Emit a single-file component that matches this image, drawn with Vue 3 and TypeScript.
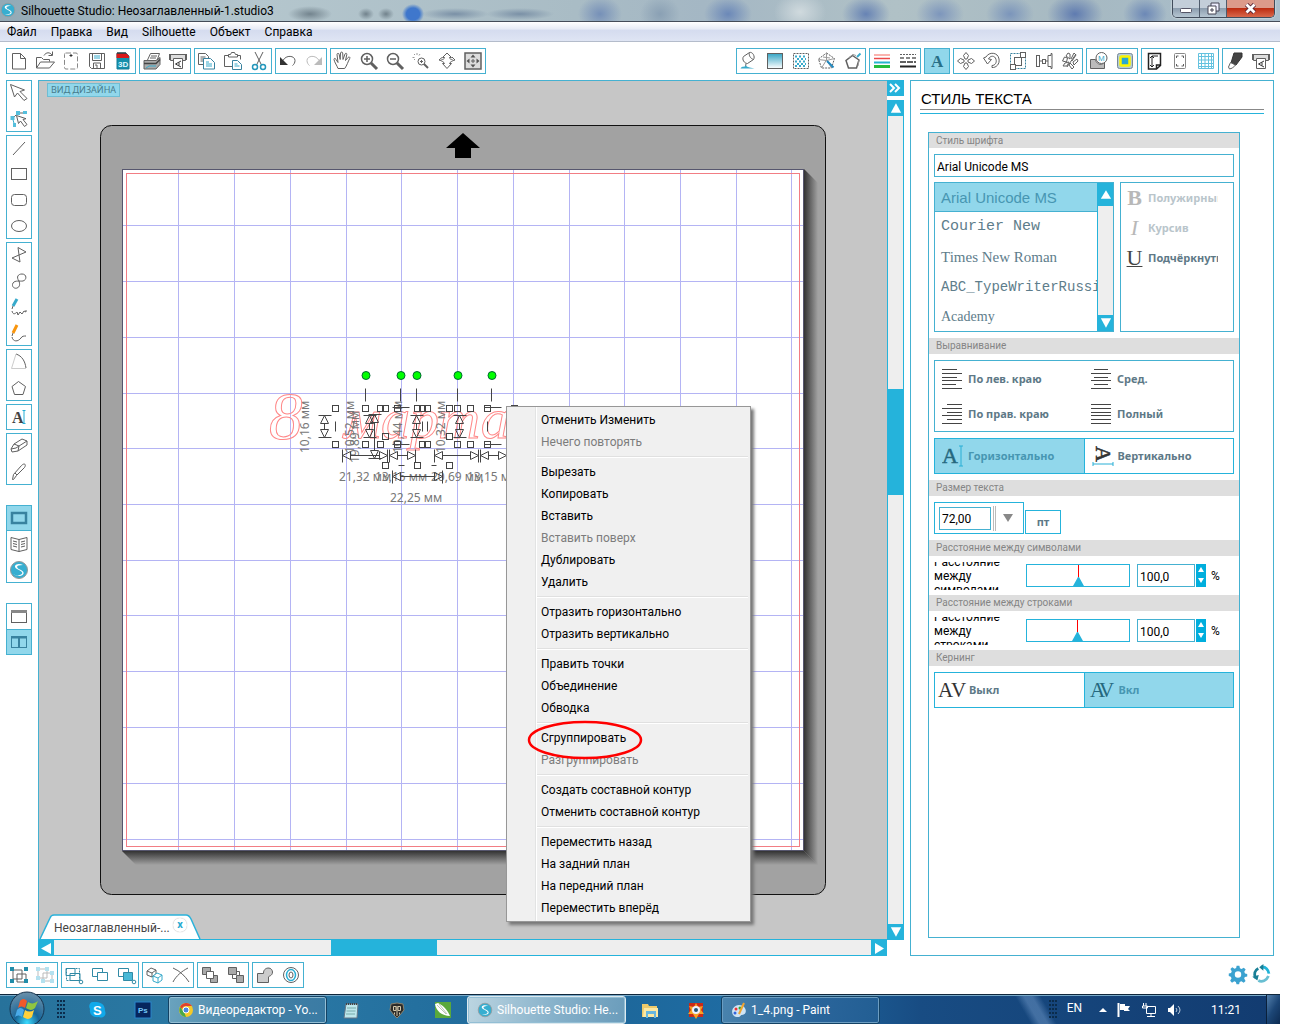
<script setup lang="ts">
import { ref } from 'vue'

interface Tool { icon: string; label: string; active?: boolean }
interface MenuItem { text: string; disabled?: boolean }

const icons: Record<string, string> = {
  file: '<path d="M6.500 5.500h8l5 5v10.500h-13zM14.500 5.500v5h5"/>',
  open: '<path d="M4.500 20V9.500h5l2 2h6v2M4.500 20l4-6h14l-5 6zM12 7.500c2-3.500 6-3.500 8-.5M20.500 3.500v4h-4"/>',
  page: '<rect x="6.500" y="5" width="13" height="16" rx="1.500" stroke-dasharray="5 2" stroke="#888"/><path d="M13 6v3M11.500 7.500h3" stroke="#333"/>',
  save: '<path d="M5.500 5.500h15v15h-13l-2-2z"/><path d="M8.500 5.500v7h9v-7M9.500 20v-5h7v5M11 17h2v3"/><path d="M10 8h6M10 10h6" stroke="#38aacb"/>',
  sd: '<path d="M7 5h9l3 3v13H7z" fill="#1590ab" stroke="#147d97"/><path d="M6.500 5.500h10l2.500 2.500v2h-12.500z" fill="#d91818" stroke="none"/><path d="M7 5h9" stroke="#222"/><text x="8" y="19" font-family="Liberation Sans" font-weight="700" font-size="8" fill="#dff6ff" stroke="none">3D</text>',
  print: '<path d="M8.500 12l3-6.500h9l-2.500 7M12 8h6M11 10h6"/><path d="M5 12.500h12l4-3v7l-4 4.500H5z" fill="#aaa"/><path d="M5 15.500h12l4-4" stroke="#444" stroke-width="1.500"/><path d="M7 20l3-2h7" stroke="#38aacb"/>',
  cutter: '<path d="M5.500 6.500h15v6h-15z" fill="#ddd"/><path d="M5 6v6M21 6v6" stroke-width="2"/><path d="M8.500 10.500h9v10h-9z" fill="#fff"/><path d="M16 13l-5.500 3 5.500 3M14 14.500v3" stroke="#333"/>',
  copy: '<path d="M4.500 5.500h7l3 3v8h-10zM6.500 9h5M6.500 11h5M6.500 13h4"/><path d="M9.500 10.500h7l4 4v6.500h-11z" fill="#fff" stroke="#38829f"/><path d="M12 14h3M12 16h6M12 18h6" stroke="#38aacb"/>',
  paste: '<path d="M12 18.500H4.500v-11h16v4"/><path d="M8.500 9V6.500h2l1-2h3l1 2h2V9z" fill="#fff"/><path d="M12.500 12.500h5l4 4v5h-9z" fill="#fff" stroke="#38829f"/><path d="M14.500 16h3M14.500 18h5" stroke="#38aacb"/>',
  cut: '<path d="M9 4l6.500 13M17 4l-6.500 13"/><circle cx="9" cy="19" r="2.500" stroke="#2497bb" stroke-width="1.500"/><circle cx="17" cy="19" r="2.500" stroke="#2497bb" stroke-width="1.500"/>',
  undo: '<path d="M8 12.500c3-6 12-5 12 0 0 2-1 4-2.500 5"/><path d="M5 9v8h8z" fill="#333" stroke="none"/>',
  redo: '<g stroke="#bbb"><path d="M18 12.500c-3-6-12-5-12 0 0 2 1 4 2.500 5"/><path d="M21 9v8h-8z" fill="#bbb" stroke="none"/></g>',
  hand: '<path d="M8 20.500c-1-3-3.500-6-4-9 0-1.500 1.500-1.500 2 0l2 3-1-8c0-1.500 2-1.500 2.200 0l1 5 .3-6.500c.2-1.200 2-1.200 2.200 0l.3 6.500 2-5.500c.6-1.300 2-.8 1.800.5l-1.300 6 2.500-3c1-1 2.500-.4 1.700 1-1.700 3-2.700 7-5 10z"/>',
  zin: '<circle cx="11" cy="11" r="5.500" stroke-width="1.500"/><path d="M8 11h6M11 8v6" stroke-width="1.500"/><path d="M15 15l6 6" stroke-width="3"/>',
  zout: '<circle cx="11" cy="11" r="5.500" stroke-width="1.500"/><path d="M8 11h6" stroke-width="1.500"/><path d="M15 15l6 6" stroke-width="3"/>',
  zsel: '<path d="M6 6l1 1M4.500 9.500h2M9 5v2M12 6l-1 1.500M6 12l1-1" stroke="#999"/><circle cx="13.500" cy="13.500" r="3.500"/><path d="M12 13.500h3M13.500 12v3"/><path d="M16 16l4 4" stroke-width="2"/>',
  zdrag: '<path d="M8.500 9.500L13 5l4.500 4.500h-2c0 1.500 1.500 2 3 2M8.500 9.500h2c0 1.500-1.500 2-3 2M8.500 15.500L13 20.500l4.500-5h-2c0-1 3-3 5.500-3.500l-3-3M8.500 15.500h2c0-1-3-3-5.500-3.500l3-2.500"/>',
  fit: '<rect x="5" y="5" width="16" height="16" fill="#ddd" stroke-width="1.500"/><path d="M13 6.500l2.500 3h-5zM13 19.500l2.500-3h-5zM6.500 13l3-2.500v5zM19.500 13l-3-2.500v5z" fill="#555" stroke="none"/><path d="M11 13h4M13 11v4"/>',
  fill: '<path d="M7.500 8.500l6-4c3-1 6 4 4 7l-6 4c-3 0-6-4-4-7zM13.500 4.500c-1 3 1 6 4 7M10 15.500l-.5 4"/><path d="M4.500 20.500c2-3 4-1 5-3 2 2 6 2 9 3z" fill="#38aacb" stroke="none"/>',
  grad: '<rect x="5.500" y="5.500" width="15" height="15" fill="url(#tool-gradient)"/>',
  patt: '<rect x="5.500" y="5.500" width="15" height="15" stroke-dasharray="2 1"/><path d="M7 8.500h12M7 13.500h12M7 18h12" stroke="#38aacb" stroke-width="2" stroke-dasharray="2 2"/><path d="M9 11h9M9 16h9" stroke="#38aacb" stroke-width="2" stroke-dasharray="2 2"/>',
  wand: '<path d="M12.500 5l8 5.500-3 9.500H7.500l-3-9z" stroke-dasharray="2 1"/><path d="M12.500 5v7l5 8M4.500 11.500l8 1 8-2M12.500 12l-5 8M9 9l7 1" stroke="#999"/><path d="M13 13l6.500 6.500" stroke="#2187bd" stroke-width="2"/>',
  poly2: '<path d="M12.500 7.500l6.500 4.500-2.500 8H8.500L6 12.500z" stroke-width="1.500"/><path d="M9 9.500l4-3 3 1M19 12l-1 6" stroke="#999"/><path d="M17 9l3.500-3.500" stroke="#38aacb" stroke-width="2"/>',
  lines: '<path d="M5 7h16" stroke="#f99a93" stroke-width="1.500"/><path d="M5 10.500h16" stroke="#eb4949" stroke-width="1.500"/><path d="M5 14.500h16" stroke="#28b4ce" stroke-width="2"/><path d="M5 18.500h16" stroke="#25bd3c" stroke-width="3"/>',
  dashes: '<path d="M5 6.500h16" stroke-dasharray="2 1"/><path d="M5 10h16" stroke-dasharray="4 2" stroke-width="1.500"/><path d="M5 14h16" stroke-dasharray="6 1" stroke-width="2"/><path d="M5 18.500h16" stroke="#222" stroke-width="2"/>',
  textA: '<text x="7" y="19" font-family="Liberation Serif" font-weight="700" font-size="17" fill="#286f87" stroke="none">A</text>',
  move: '<path d="M13 4.500l2.500 3-1.500 3.500h-2l-1.500-3.500zM13 21.500l2.500-3-1.500-3.500h-2l-1.500 3.500zM4.500 13l3-2.500L11 12v2l-3.500 1.500zM21.500 13l-3-2.500L15 12v2l3.500 1.500z"/>',
  rotate: '<path d="M7 9c3-5.500 12-5 13 2 1 5-3 9-7 8.500v-2c3 0 5-3 4-6C16 7 11 7.500 9.500 11l3 .5L8.500 16 4.500 10z"/>',
  scale: '<path d="M5.500 5.500h15v15h-15z" stroke="#38829f" stroke-dasharray="2 1"/><rect x="9.500" y="9.500" width="7" height="8"/><rect x="5.500" y="16.500" width="5" height="5" fill="#fff"/><rect x="15.500" y="4.500" width="5" height="5" fill="#fff"/>',
  align: '<rect x="5.500" y="7.500" width="3" height="11"/><rect x="11.500" y="11.500" width="3" height="4"/><path d="M17 7.500h3v-2h1v15h-1v-2h-3zM8.500 13h3M14.500 13H17"/>',
  replicate: '<path d="M5.500 13l2-4 3 1-1 4zM9 8l2-3 2 1v5zM6 18l2-3 4-1-2 4zM14 11l3-6 2 2-4 6M16 14l4-3 1 2-4 4zM13 15l4 4-2 2-3-4zM10 19l9-13"/>',
  modify: '<path d="M4.500 11.500h5c1 6 8 6 9 2v7h-14z" fill="#bbb"/><circle cx="15.500" cy="10" r="5.500" fill="#fff"/><text x="12" y="13" font-family="Liberation Sans" font-size="8" fill="#38aacb" stroke="none">M</text>',
  trace: '<rect x="5.500" y="5.500" width="15" height="15" rx="2" fill="#b5cdd6" stroke="#789"/><rect x="8.500" y="8.500" width="9" height="9" rx="1" fill="#29a8d0" stroke="#fbf400" stroke-width="2.500"/>',
  pagea: '<path d="M7.500 5.500h12v12l-4 3.500h-8zM15.500 21v-4h4" stroke="#222" stroke-width="1.500"/><path d="M11 8v10M11 8h6M9 10l2-2 2 2M9 17l2 2 2-2" stroke="#222"/>',
  reg: '<rect x="7.500" y="5.500" width="11" height="15" rx="1" stroke="#888"/><path d="M9.500 10V8h2M14.500 8h2v2M9.500 16v2h2M14.500 18h2v-2"/>',
  grid: '<path d="M5.500 5.500h15v15h-15zM8.500 5v16M12 5v16M15.500 5v16M18.500 5v16M5 8.500h16M5 12h16M5 15.500h16M5 18.500h16" stroke="#64c2df"/>',
  blade: '<path d="M12 5h8v4l-6 8-5-2z" fill="#444" stroke="#333"/><path d="M8.500 14.500l5 2.500-3 3-3 1-1-2z" fill="#fff"/>',
  arrow: '<path d="M4.500 4.500l4 12.500 3-4 6.500 7.500 3-2-7-7 4.500-1.500z"/>',
  edit: '<path d="M7 12l5-5h8"/><path d="M6.500 12l2 7" stroke="#38aacb"/><path d="M10.500 9.500l2 8 2-2.500 4 5.500 2.500-2-4-5 3-.8z" fill="#fff"/><path d="M10 5h4v4h-4zM17 5h4v3h-4zM4.500 10h4v4h-4zM7 17h3v4H7z" fill="#55bfdc" stroke="none"/>',
  line: '<path d="M7 20L19 7"/>',
  rect: '<rect x="5.500" y="7.500" width="15" height="11"/>',
  rrect: '<rect x="5.500" y="7.500" width="15" height="11" rx="3"/>',
  ellipse: '<ellipse cx="13" cy="13" rx="7.500" ry="5.500"/>',
  poly: '<path d="M12 5.500l8 4.500-14 6 8 4z"/>',
  curve: '<path d="M13 13c-3-4-1-7 3-7 5 0 5 6 1 7-3 .5-8-1-10 2-2 4 2 6 4 5 3-1 3-4 2-7z"/>',
  pencil: '<path d="M7 12l4-7" stroke="#38aacb" stroke-width="3"/><path d="M7 12l-1 3M6 17c1 4 3 3 5 1l1 3 2-3 2 2 2-3 2 1v-2"/>',
  smooth: '<path d="M7 13l4-8" stroke="#f9950c" stroke-width="3"/><path d="M7 13l-1 3M6 17c1 5 6 5 9 1 1-2 3-2 5-2"/>',
  arc: '<path d="M10 5c6 2 9 7 10 14"/><path d="M10 5L5.500 19.500H20" stroke="#ccc"/>',
  penta: '<path d="M12.500 6.500l7 5-2.500 8H8.500l-2.500-8z"/>',
  textI: '<text x="6" y="19" font-family="Liberation Serif" font-weight="700" font-size="16" fill="#444" stroke="none">A</text><path d="M16.500 6.500h3M18 6.500v13M16.500 19.500h3" stroke="#25aed5"/>',
  eraser: '<path d="M5 16l3-5 8-5 5 2v4l-9 6-6 1zM8 11l5 2 8-5M13 13l-1 5M5 16l5-1 3-2"/>',
  knife: '<path d="M6.500 20.500l1-5 8-9c3-3 5-1 3 2l-8 8-3 4zM9 14l2 2"/>',
  view1: '<rect x="6" y="8" width="14" height="10" fill="#91d7eb" stroke="#38829f" stroke-width="2.500"/>',
  book: '<path d="M5 6.500l8 2 8-2v12l-8 2-8-2zM13 8.500v12M7 10l4 1M7 12.500l4 1M7 15l4 1M19 10l-4 1M19 12.500l-4 1M19 15l-4 1" stroke-width="1"/>',
  store: '<circle cx="13" cy="13" r="8.500" stroke="#999" fill="#37aed0"/><path d="M17 8c-6-3-11 1-6 4 4 2 8 4 3 6-3 1-5 0-7-1 9 5 14-1 8-4-5-2-6-5 2-5z" fill="#fff" stroke="none"/>',
  win1: '<rect x="5.500" y="7.500" width="15" height="12"/><path d="M5 8.500h16" stroke="#888" stroke-width="3"/>',
  win2: '<g stroke="#38829f"><rect x="5.500" y="7.500" width="15" height="11"/><path d="M5 8.500h16M13 9v10" stroke-width="2"/></g>',
  group: '<path d="M7 8h9v9H7zM11 12h9v8h-9z"/><path d="M4 5h4v4H4zM18 5h4v4h-4zM4 17h4v4H4zM18 17h4v4h-4z" fill="#218ca9" stroke="none"/>',
  ungroup: '<g stroke="#bbb"><path d="M6 7h9v9H6zM11 11h9v8h-9z"/><path d="M4 5h4v4H4zM13 5h4v4h-4zM4 14h4v4H4zM18 9h4v4h-4zM18 17h4v4h-4zM9 17h4v4H9z" fill="#b4e1ef" stroke="none"/></g>',
  sel1: '<g stroke="#318aa5"><path d="M5.500 6.500h13v12h-13z" stroke-dasharray="2 1"/><path d="M5 6.500h9v7H5zM9 11.500h10v7H9z"/><circle cx="20" cy="20" r="1.800"/></g>',
  sel2: '<g stroke="#318aa5"><path d="M5.500 6.500h10v8h-10z"/><path d="M10.500 10.500h10v8h-10z" fill="#fff"/></g>',
  sel3: '<g stroke="#318aa5"><path d="M5.500 6.500h10v8h-10z"/><path d="M10.500 10.500h9v8h-9z" fill="#49b9d7"/><circle cx="21" cy="20" r="1.800" fill="#fff"/></g>',
  cubes: '<path d="M5 9l4-3 5 2v4l-4 3-5-2zM5 9l5 2 4-3M10 11v4"/><path d="M11 14l4-3 5 2v5l-4 3-5-2zM11 14l5 2 4-3M16 16v5" fill="#fff" stroke="#38aacb"/>',
  cross: '<path d="M5 6c7 3 12 8 16 14M20 6C14 9 8 14 5 20"/>',
  front: '<path d="M5.500 5.500h8v7h-8zM13.500 13.500h7v7h-7z" fill="#aaa"/><path d="M9.500 9.500h7v7h-7z" fill="#fff"/>',
  back: '<path d="M5.500 5.500h8v7h-8zM13.500 13.500h7v7h-7z" fill="#aaa"/><path d="M13 9.500h3.500v4M9.500 13v3.500h4"/>',
  weld: '<path d="M5.500 11.500h6C11 5 20 4 20.500 10c0 4-4 4-4 5v5.500h-11z" fill="#ccc"/>',
  offset: '<circle cx="13" cy="13" r="7.500"/><ellipse cx="13" cy="13" rx="4.500" ry="5.500" stroke="#25aed5" stroke-width="1.500"/><ellipse cx="13" cy="13" rx="2" ry="3"/>',
  gear: '<path d="M11.500 4h3l.6 2.800 1.700.8 2.500-1.500 2 2-1.500 2.500.8 1.900 2.400.5v2.500l-2.600.7-.7 1.700 1.500 2.500-2 2-2.500-1.500-1.900.8-.6 2.300h-2.800l-.7-2.500-1.700-.7-2.500 1.500-2-2L6 17.500l-.8-1.700L3 15v-2.500l2.500-.7.7-1.800-1.400-2.400 2-2 2.400 1.500 1.800-.8zM13 10a3.500 3.500 0 100 7 3.500 3.500 0 000-7z" fill="#3ba2d0" fill-rule="evenodd" stroke="none"/>',
  sync: '<g stroke-width="3"><path d="M12 5.500c5-1 8 3 8.500 7" stroke="#21b3d8"/><path d="M20 15c-2 5-7 7-11 5" stroke="#69bfd2"/><path d="M6 17c-2-4-1-8 3-10" stroke="#197f96"/></g><path d="M14.500 2L10 5.500l4.500 4zM2.500 16l7-2-1.500 6z" fill="#197f96" stroke="none"/>'
}

const t = (icon: string, label: string, active = false): Tool => ({ icon, label, active })

const leftTop: Tool[][] = [
  [t('file', 'Создать'), t('open', 'Открыть'), t('page', 'Страница'), t('save', 'Сохранить'), t('sd', 'Карта SD')],
  [t('print', 'Печать'), t('cutter', 'Вырезать на плоттере')],
  [t('copy', 'Копировать'), t('paste', 'Вставить'), t('cut', 'Вырезать')],
  [t('undo', 'Отменить'), t('redo', 'Повторить')],
  [t('hand', 'Панорама'), t('zin', 'Увеличить'), t('zout', 'Уменьшить'), t('zsel', 'Увеличить выделенное'), t('zdrag', 'Масштаб'), t('fit', 'По размеру страницы')]
]
const rightTop: Tool[][] = [
  [t('fill', 'Цвет заливки'), t('grad', 'Градиент'), t('patt', 'Узор'), t('wand', 'Эскиз'), t('poly2', 'Стразы')],
  [t('lines', 'Цвет линии'), t('dashes', 'Стиль линии')],
  [t('textA', 'Стиль текста', true)],
  [t('move', 'Переместить'), t('rotate', 'Повернуть'), t('scale', 'Масштаб'), t('align', 'Выровнять'), t('replicate', 'Дублировать')],
  [t('modify', 'Изменить'), t('trace', 'Трассировка')],
  [t('pagea', 'Параметры страницы'), t('reg', 'Метки'), t('grid', 'Сетка')],
  [t('blade', 'Параметры резки'), t('cutter', 'Отправить')]
]
const side: Tool[][] = [
  [t('arrow', 'Выделение'), t('edit', 'Править точки')],
  [t('line', 'Линия'), t('rect', 'Прямоугольник'), t('rrect', 'Скруглённый прямоугольник'), t('ellipse', 'Эллипс')],
  [t('poly', 'Многоугольник'), t('curve', 'Кривая'), t('pencil', 'От руки'), t('smooth', 'Плавная линия')],
  [t('arc', 'Дуга'), t('penta', 'Правильный многоугольник')],
  [t('textI', 'Текст')],
  [t('eraser', 'Ластик'), t('knife', 'Нож')],
  [t('view1', 'Вид дизайна', true), t('book', 'Библиотека'), t('store', 'Магазин')],
  [t('win1', 'Одно окно'), t('win2', 'Два окна', true)]
]
const bottom: Tool[][] = [
  [t('group', 'Сгруппировать'), t('ungroup', 'Разгруппировать')],
  [t('sel1', 'Выделить всё'), t('sel2', 'Снять выделение'), t('sel3', 'Выделить по цвету')],
  [t('cubes', 'Дублировать'), t('cross', 'Удалить')],
  [t('front', 'На передний план'), t('back', 'На задний план')],
  [t('weld', 'Объединить'), t('offset', 'Контур')]
]

const menus = ['Файл', 'Правка', 'Вид', 'Silhouette', 'Объект', 'Справка']

const contextMenu: MenuItem[][] = [
  [{ text: 'Отменить Изменить' }, { text: 'Нечего повторять', disabled: true }],
  [{ text: 'Вырезать' }, { text: 'Копировать' }, { text: 'Вставить' }, { text: 'Вставить поверх', disabled: true }, { text: 'Дублировать' }, { text: 'Удалить' }],
  [{ text: 'Отразить горизонтально' }, { text: 'Отразить вертикально' }],
  [{ text: 'Править точки' }, { text: 'Объединение' }, { text: 'Обводка' }],
  [{ text: 'Сгруппировать' }, { text: 'Разгруппировать', disabled: true }],
  [{ text: 'Создать составной контур' }, { text: 'Отменить составной контур' }],
  [{ text: 'Переместить назад' }, { text: 'На задний план' }, { text: 'На передний план' }, { text: 'Переместить вперёд' }]
]

const fonts = [
  { name: 'Arial Unicode MS', cls: 'f-arial' },
  { name: 'Courier New', cls: 'f-courier' },
  { name: 'Times New Roman', cls: 'f-times' },
  { name: 'ABC_TypeWriterRussian', cls: 'f-type' },
  { name: 'Academy', cls: 'f-academy' }
]
const font = ref('Arial Unicode MS')
const size = ref('72,00')
const spacings = ref([
  { id: 'chars', title: 'Расстояние между символами', value: '100,0', pos: 46 },
  { id: 'rows', title: 'Расстояние между строками', value: '100,0', pos: 45 }
])

const alignments = [
  { text: 'По лев. краю', d: 'M0 1.500h15M0 5.500h20M0 9.500h15M0 12.500h20M0 16.500h14M0 20.500h20' },
  { text: 'Сред.', d: 'M3 1.500h14M0 5.500h20M3 9.500h14M0 12.500h20M3 16.500h14M0 20.500h20' },
  { text: 'По прав. краю', d: 'M5 1.500h15M0 5.500h20M5 9.500h15M0 12.500h20M5 16.500h15M0 20.500h20' },
  { text: 'Полный', d: 'M0 1.500h20M0 5.500h20M0 9.500h20M0 12.500h20M0 16.500h20M0 20.500h20' }
]

// Grid of the cutting mat, in canvas units
const gridX = [178, 234, 290, 346, 401, 457, 513, 569, 624, 680, 736, 791]
const gridY = [225, 281, 337, 393, 448, 504, 560, 615, 671, 727, 783, 839]
const knobs = [366, 401, 417, 458, 492]
const handles: [number, number][] = [
  ...[335, 365, 380, 385, 397, 417, 422, 427, 449, 457, 470, 487, 514].map((x): [number, number] => [x, 408]),
  ...[385, 449].map((x): [number, number] => [x, 436]),
  ...[335, 365, 380, 397, 422, 427, 457, 470, 487].map((x): [number, number] => [x, 444]),
  ...[385, 417, 449].map((x): [number, number] => [x, 465])
]
const vArrows = [[324, 415, 437], [369, 415, 437], [374, 414, 458], [416, 415, 437], [459, 415, 437]]
const hArrows = [[455, 342, 387], [455, 389, 415], [455, 434, 478], [455, 480, 506], [476, 392, 442]]
const vPath = ([x, a, b]: number[]) =>
  `M${x - 6} ${a}h13M${x - 6} ${b}h13M${x} ${a + 8}v${b - a - 16}M${x} ${a}l4 8h-8zM${x} ${b}l4-8h-8z`
const hPath = ([y, a, b]: number[]) =>
  `M${a} ${y - 6}v13M${b} ${y - 6}v13M${a + 8} ${y}h${b - a - 16}M${a} ${y}l8-4v8zM${b} ${y}l-8-4v8z`
const hLabels = [
  { x: 339, y: 481, s: '21,32 мм' }, { x: 375, y: 481, s: '13,15 мм' }, { x: 431, y: 481, s: '20,69 мм' },
  { x: 467, y: 481, s: '13,15 мм' }, { x: 390, y: 502, s: '22,25 мм' }
]
const vLabels = [
  { x: 309, y: 453, s: '10,16 мм' }, { x: 354, y: 453, s: '10,52 мм' }, { x: 359, y: 463, s: '19,89 мм' },
  { x: 402, y: 453, s: '10,44 мм' }, { x: 445, y: 453, s: '10,32 мм' }
]
</script>

<template>
  <div class="app">
    <svg class="defs" width="0" height="0" aria-hidden="true">
      <defs>
        <linearGradient id="tool-gradient" x1="0" y1="0" x2="0" y2="1">
          <stop offset="0" stop-color="#35a5c5" /><stop offset="1" stop-color="#fff" />
        </linearGradient>
      </defs>
    </svg>

    <header class="titlebar">
      <svg class="logo" viewBox="3 3 20 20" v-html="icons.store"></svg>
      <h1>Silhouette Studio: Неозаглавленный-1.studio3</h1>
      <div class="wincontrols">
        <button aria-label="Свернуть"><svg width="12" height="12" viewBox="0 0 12 12"><rect x=".5" y="5.500" width="11" height="4" rx="1" fill="#fff" stroke="#556" /></svg></button>
        <button aria-label="Развернуть"><svg width="13" height="13" viewBox="0 0 13 13"><path d="M4 1h8v8H4z" fill="#eef" stroke="#445" /><path d="M1 4h8v8H1z" fill="#fff" stroke="#445" /><path d="M4 7h2v2H4z" fill="#fff" stroke="#445" /></svg></button>
        <button class="close" aria-label="Закрыть"><svg width="13" height="11" viewBox="0 0 13 11"><path d="M2.500 1.500l8 8M10.500 1.500l-8 8" stroke="#523" stroke-width="4.500" /><path d="M2.500 1.500l8 8M10.500 1.500l-8 8" stroke="#fff" stroke-width="2.800" /></svg></button>
      </div>
    </header>

    <nav class="menubar">
      <button v-for="m in menus" :key="m">{{ m }}</button>
    </nav>

    <div class="toolbar">
      <div class="tools">
        <div v-for="(g, i) in leftTop" :key="i" class="group">
          <button v-for="b in g" :key="b.label" :aria-label="b.label"><svg class="ico" viewBox="0 0 26 26" v-html="icons[b.icon]"></svg></button>
        </div>
      </div>
      <div class="tools">
        <div v-for="(g, i) in rightTop" :key="i" class="group">
          <button v-for="b in g" :key="b.label" :aria-label="b.label" :class="{ active: b.active }"><svg class="ico" viewBox="0 0 26 26" v-html="icons[b.icon]"></svg></button>
        </div>
      </div>
    </div>

    <main class="work">
      <aside class="side">
        <div v-for="(g, i) in side" :key="i" class="group vertical" :class="{ apart: i > 5 }">
          <button v-for="b in g" :key="b.label" :aria-label="b.label" :class="{ active: b.active }"><svg class="ico" viewBox="0 0 26 26" v-html="icons[b.icon]"></svg></button>
        </div>
      </aside>

      <section class="stage">
        <div class="canvas">
          <svg class="drawing" width="848" height="858" viewBox="39 81 848 858">
            <defs>
              <linearGradient id="shade-r"><stop offset="0" stop-color="#333" /><stop offset="1" stop-color="#a2a2a2" /></linearGradient>
              <linearGradient id="shade-b" x1="0" y1="0" x2="0" y2="1"><stop offset="0" stop-color="#333" /><stop offset="1" stop-color="#a2a2a2" /></linearGradient>
            </defs>
            <rect x="100.500" y="125.500" width="725" height="769" rx="11" fill="#a2a2a2" stroke="#111" />
            <path d="M463 133l17 15h-9v10h-16v-10h-9z" fill="#000" />
            <path d="M804 169l14 14v682l-14-14z" fill="url(#shade-r)" />
            <path d="M122 851h682l14 14H136z" fill="url(#shade-b)" />
            <rect x="122.500" y="169.500" width="681" height="681" fill="#fff" stroke="#56566e" />
            <g stroke="#b4b4f4" shape-rendering="crispEdges">
              <line v-for="x in gridX" :key="'x' + x" :x1="x + 0.5" :x2="x + 0.5" y1="170" y2="850" />
              <line v-for="y in gridY" :key="'y' + y" :y1="y + 0.5" :y2="y + 0.5" x1="123" x2="803" />
            </g>
            <rect x="126.500" y="173.500" width="673" height="673" fill="none" stroke="#f27d84" />
            <g class="lettering">
              <text x="269" y="439" font-size="67">8</text>
              <text x="344" y="438" font-size="58">марта</text>
            </g>
            <g class="dims">
              <text v-for="(l, i) in hLabels" :key="'h' + i" :x="l.x" :y="l.y">{{ l.s }}</text>
              <text v-for="(l, i) in vLabels" :key="'v' + i" :transform="`translate(${l.x} ${l.y}) rotate(-90)`">{{ l.s }}</text>
            </g>
            <g fill="none" stroke="#444" transform="translate(0.5 0.5)">
              <path v-for="(a, i) in vArrows" :key="'va' + i" :d="vPath(a)" />
              <path v-for="(a, i) in hArrows" :key="'ha' + i" :d="hPath(a)" />
              <path v-for="x in knobs" :key="'k' + x" :d="`M${x - 1} 388v13`" />
              <path d="M392 407h17M484 407h17M392 444h17M484 444h17M335 421v10M427 421v10M487 421v10M422 421v10M398 465h6M431 465h5" />
              <rect v-for="(h, i) in handles" :key="'q' + i" :x="h[0] - 3" :y="h[1] - 3" width="6" height="6" />
            </g>
            <circle v-for="x in knobs" :key="'c' + x" :cx="x" cy="375.500" r="4" fill="#0f0" stroke="#063" />
          </svg>

          <span class="viewtag">ВИД ДИЗАЙНА</span>

          <div class="doctab">
            <svg class="tabshape" viewBox="0 0 162 25" preserveAspectRatio="none"><path d="M1 25L11 4q1-3 4-3h132q3 0 5 4l9 20" fill="#fff" stroke="#2bb2da" stroke-width="1.500" /></svg>
            <span>Неозаглавленный-...</span>
            <button aria-label="Закрыть вкладку">x</button>
          </div>

          <div class="ctx" role="menu">
            <div v-for="(g, i) in contextMenu" :key="i" class="ctxgroup">
              <button v-for="m in g" :key="m.text" role="menuitem" :disabled="m.disabled">{{ m.text }}</button>
            </div>
            <svg class="mark" width="116" height="40" viewBox="0 0 116 40" aria-hidden="true"><ellipse cx="58" cy="20" rx="56" ry="18" fill="none" stroke="#f00" stroke-width="2.500" /></svg>
          </div>
        </div>

        <div class="hscroll">
          <button aria-label="Влево"><svg width="16" height="16" viewBox="0 0 16 16"><path d="M13 3v11L3 8.500z" fill="#fff" /></svg></button>
          <i class="h1"></i><i class="thumb"></i><i class="h2"></i>
          <button aria-label="Вправо"><svg width="16" height="16" viewBox="0 0 16 16"><path d="M4 3v11l9-5.500z" fill="#fff" /></svg></button>
        </div>
      </section>

      <div class="vcol">
        <button class="expand" aria-label="Развернуть панель"><svg width="16" height="16" viewBox="0 0 16 16"><path d="M3 4l4 4-4 4M8 4l4 4-4 4" fill="none" stroke="#fff" stroke-width="2" /></svg></button>
        <div class="vscroll">
          <button aria-label="Вверх"><svg width="15" height="16" viewBox="0 0 16 16"><path d="M3 13h11L8.500 3z" fill="#fff" /></svg></button>
          <i class="v1"></i><i class="thumb"></i><i class="v2"></i>
          <button aria-label="Вниз"><svg width="15" height="16" viewBox="0 0 16 16"><path d="M3 3h11L8.500 13z" fill="#fff" /></svg></button>
        </div>
      </div>

      <aside class="panel">
        <h2>СТИЛЬ ТЕКСТА</h2>
        <div class="props">
          <h3><label for="font">Стиль шрифта</label></h3>
          <div class="block">
            <input id="font" v-model="font" class="field fontname" type="text" />
            <div class="row fontrow">
              <div class="fontlist">
                <div class="names">
                  <button v-for="f in fonts" :key="f.name" :class="[f.cls, { active: f.name === font }]" @click="font = f.name">{{ f.name }}</button>
                </div>
                <div class="vscroll small">
                  <button aria-label="Вверх" class="tall"><svg width="15" height="16" viewBox="0 0 16 16"><path d="M3 12h11L8.500 3z" fill="#fff" /></svg></button>
                  <i class="fill"></i>
                  <button aria-label="Вниз"><svg width="15" height="16" viewBox="0 0 16 16"><path d="M3 3h11L8.500 13z" fill="#fff" /></svg></button>
                </div>
              </div>
              <div class="styles">
                <button disabled><b class="glyph">B</b><span>Полужирный</span></button>
                <button disabled><i class="glyph">I</i><span>Курсив</span></button>
                <button><u class="glyph">U</u><span>Подчёркнуть</span></button>
              </div>
            </div>
          </div>

          <h3>Выравнивание</h3>
          <div class="block">
            <div class="aligns">
              <button v-for="a in alignments" :key="a.text"><svg width="20" height="22" viewBox="0 0 20 22"><path :d="a.d" stroke="#444" stroke-width="1" /></svg>{{ a.text }}</button>
            </div>
            <div class="pair">
              <button class="active"><svg width="22" height="22" viewBox="0 0 22 22"><text x="0" y="18" font-family="Liberation Serif" font-size="22" fill="#25687e" stroke="#25687e" stroke-width=".5">A</text><path d="M17 1h4M19 1v20M17 21h4" stroke="#29afd6" fill="none" /></svg>Горизонтально</button>
              <button><svg width="22" height="22" viewBox="0 0 22 22"><text transform="translate(4 1) rotate(90)" font-family="Liberation Serif" font-size="22" fill="#333" stroke="#333" stroke-width=".5">A</text><path d="M1 17v4M1 19h20M21 17v4" stroke="#29afd6" fill="none" /></svg>Вертикально</button>
            </div>
          </div>

          <h3><label for="size">Размер текста</label></h3>
          <div class="block sizes">
            <div class="combo">
              <input id="size" v-model="size" class="field" type="text" />
              <button aria-label="Выбрать размер"><svg width="10" height="8" viewBox="0 0 10 8"><path d="M0 0h10L5 8z" fill="#888" /></svg></button>
            </div>
            <button class="unit">пт</button>
          </div>

          <template v-for="s in spacings" :key="s.id">
            <h3>{{ s.title }}</h3>
            <div class="block spacing">
              <label :for="s.id"><span>{{ s.title }}</span></label>
              <input :id="s.id + '-range'" v-model="s.pos" class="slider" type="range" max="91" :aria-label="s.title" />
              <input :id="s.id" v-model="s.value" class="field" type="text" />
              <div class="spin">
                <button aria-label="Больше"><svg width="6" height="5" viewBox="0 0 6 5"><path d="M0 5h6L3 0z" fill="#fff" /></svg></button>
                <button aria-label="Меньше"><svg width="6" height="5" viewBox="0 0 6 5"><path d="M0 0h6L3 5z" fill="#fff" /></svg></button>
              </div>
              <span class="pct">%</span>
            </div>
          </template>

          <h3>Кернинг</h3>
          <div class="block">
            <div class="pair kern">
              <button><svg width="28" height="20" viewBox="0 0 28 20"><text x="-1" y="17" fill="#333">A</text><text x="12" y="17" fill="#333">V</text></svg>Выкл</button>
              <button class="active"><svg width="28" height="20" viewBox="0 0 28 20"><text x="1" y="17" fill="#25687e">A</text><text x="10" y="17" fill="#25687e">V</text></svg>Вкл</button>
            </div>
          </div>
        </div>
      </aside>
    </main>

    <div class="toolbar foot">
      <div class="tools">
        <div v-for="(g, i) in bottom" :key="i" class="group">
          <button v-for="b in g" :key="b.label" :aria-label="b.label"><svg class="ico" viewBox="0 0 26 26" v-html="icons[b.icon]"></svg></button>
        </div>
      </div>
      <div class="prefs">
        <button aria-label="Настройки"><svg class="ico" viewBox="0 1 26 26" v-html="icons.gear"></svg></button>
        <button aria-label="Обновить"><svg class="ico" viewBox="0 1 26 26" v-html="icons.sync"></svg></button>
      </div>
    </div>

    <footer class="taskbar">
      <button class="start" aria-label="Пуск">
        <svg width="38" height="34" viewBox="0 0 38 34">
          <defs><radialGradient id="orb" cx=".5" cy=".9" r=".9"><stop offset="0" stop-color="#3bdcff" /><stop offset=".4" stop-color="#176699" /><stop offset="1" stop-color="#6d91aa" /></radialGradient></defs>
          <circle cx="19" cy="18" r="17" fill="url(#orb)" stroke="#16334e" />
          <path d="M12 10c3-3 5-2 7 0l-2 7c-3-2-5-2-7 0z" fill="#f0592a" /><path d="M20 11c3 2 6 2 10-1l-3 7c-3 3-6 2-9 0z" fill="#8fc541" />
          <path d="M9 19c3-3 5-2 7 0l-2 7c-3-2-5-2-7 0z" fill="#4aaae8" /><path d="M17 19c3 2 6 2 9 0l-2 7c-3 3-6 2-9 0z" fill="#ffd13b" />
        </svg>
      </button>
      <i class="grip"></i>
      <button class="pin p1" aria-label="Skype"><svg width="18" height="18" viewBox="0 0 18 18"><path d="M5 1c3 0 12-1 12 9 2 4-2 8-6 6-6 1-10-3-9-8-2-3 0-7 3-7z" fill="#11a9ea" /><text x="5" y="14" font-family="Liberation Sans" font-weight="700" font-size="13" fill="#fff">S</text></svg></button>
      <button class="pin" aria-label="Photoshop"><svg width="18" height="18" viewBox="0 0 18 18"><rect x="1" y="1" width="16" height="16" fill="#06265e" stroke="#2a83ca" /><text x="4" y="12" font-family="Liberation Sans" font-weight="700" font-size="8" fill="#74c8f8">Ps</text></svg></button>
      <button class="task"><svg width="16" height="16" viewBox="0 0 16 16"><circle cx="8" cy="8" r="7" fill="#f5c928" /><path d="M2 5a7 7 0 0112-1H8a4 4 0 00-4 3z" fill="#df4030" /><path d="M2 5l4 5 2 5A7 7 0 012 5z" fill="#47a84b" /><circle cx="8" cy="8" r="3" fill="#4a88e0" stroke="#fff" /></svg><span>Видеоредактор - Yo...</span></button>
      <button class="pin p2" aria-label="Блокнот"><svg width="18" height="18" viewBox="0 0 18 18"><path d="M4 3h12l-1 14H2z" fill="#bde7ec" stroke="#678" /><path d="M4 3h12" stroke="#444" stroke-width="2" stroke-dasharray="1 1" /><path d="M5 7h9M4.500 10h9M4 13h9" stroke="#7aa" /></svg></button>
      <button class="pin" aria-label="World of Tanks"><svg width="18" height="18" viewBox="0 0 18 18"><path d="M3 3q6-2 12 0l1 6-4 5-3 3-3-3-4-5z" fill="#2c2b28" stroke="#8b8470" /><path d="M5.500 5.500h2.500v4H5.500zM10 5.500h2.500v4H10zM9 5v10M6.500 11.500v2M11.500 11.500v2" fill="none" stroke="#d2c8aa" /></svg></button>
      <button class="pin" aria-label="CorelDRAW"><svg width="18" height="18" viewBox="0 0 18 18"><path d="M1 1h16v16H1z" fill="#5aa83b" /><path d="M1 3l3-1c6 3 10 8 12 13-8 0-14-5-15-12z" fill="#fff" /><path d="M3 4l9 9M5 3l8 10" stroke="#bac6b4" /></svg></button>
      <button class="task on"><svg width="16" height="16" viewBox="3 3 20 20" v-html="icons.store"></svg><span>Silhouette Studio: Не...</span></button>
      <button class="pin p2" aria-label="Проводник"><svg width="18" height="18" viewBox="0 0 18 18"><path d="M1 3h6l1 2h8v11H1z" fill="#edca6b" /><path d="M3 7h14v9H2z" fill="#fce8a2" /><path d="M5 10h10v7h-2v-4H7v4H5z" fill="#68b7df" /></svg></button>
      <button class="pin" aria-label="Просмотр"><svg width="18" height="18" viewBox="0 0 18 18"><rect x="2" y="2" width="14" height="14" fill="#cb2819" /><path d="M9 2l2 4 5-1-2 4 3 4-5 0-3 5-3-5H1l3-4-2-4 5 1z" fill="#f5a326" /><circle cx="9" cy="9" r="4" fill="#eef" /><circle cx="9" cy="9" r="2" fill="#257" /></svg></button>
      <button class="task paint"><svg width="16" height="16" viewBox="0 0 16 16"><path d="M8 3c8 0 9 10 3 10-2 0-1 2-4 2C-1 15-1 4 8 3z" fill="#cfe4f4" /><circle cx="5" cy="7" r="1.500" fill="#e33" /><circle cx="9" cy="6" r="1.500" fill="#3a3" /><circle cx="4" cy="11" r="1.500" fill="#36d" /><path d="M8 12l5-11" stroke="#f0a42f" stroke-width="2" /></svg><span>1_4.png - Paint</span></button>
      <div class="tray">
        <i class="grip"></i>
        <span class="lang">EN</span>
        <button aria-label="Скрытые значки"><svg width="8" height="4" viewBox="0 0 8 4"><path d="M0 4h8L4 0z" fill="#fff" /></svg></button>
        <button aria-label="Центр поддержки"><svg width="16" height="16" viewBox="0 0 16 16"><path d="M2.500 1v14" stroke="#fff" stroke-width="2" /><path d="M4 2h5v2h5l-2 3 2 2H8V8H4z" fill="#fff" /></svg></button>
        <button aria-label="Сеть"><svg width="16" height="16" viewBox="0 0 16 16"><path d="M5.500 4.500h9v7h-9zM10 12v3M6 14.500h8M2.500 1v3M5 1v3M1.500 4h5v2h-5z" fill="none" stroke="#fff" /></svg></button>
        <button aria-label="Громкость"><svg width="16" height="16" viewBox="0 0 16 16"><path d="M2 6h2l4-4v12l-4-4H2z" fill="#fff" /><path d="M10 6q2 2 0 4M12 4q4 4 0 8" fill="none" stroke="#bcd" /></svg></button>
        <time>11:21</time>
        <button class="desktop" aria-label="Показать рабочий стол"></button>
      </div>
    </footer>
  </div>
</template>

<style>
body { background: #fff; }
</style>

<style scoped>
* { box-sizing: border-box; }
.app {
  --line: #45b1d1;
  --cyan: #25b3db;
  --wide: "Noto Sans", "Open Sans", sans-serif;
  min-height: 100vh;
  padding-right: 10px;
  display: flex;
  flex-direction: column;
  font: 12px/16px Roboto, "Open Sans", "Noto Sans", sans-serif;
  color: #000;
}
.defs { position: absolute; }
button { margin: 0; padding: 0; border: 0; background: none; font: inherit; color: inherit; display: block; text-align: left; white-space: nowrap; }
input { font: inherit; margin: 0; min-width: 0; }
svg { display: block; flex: none; }
i { display: block; }

.titlebar {
  height: 22px;
  display: flex;
  align-items: center;
  border-bottom: 1px solid #444c58;
  background:
    radial-gradient(22px 8px at 310px 14px, #73848e, transparent),
    radial-gradient(8px 6px at 366px 14px, #71828c, transparent),
    radial-gradient(8px 6px at 386px 14px, #71828c, transparent),
    radial-gradient(11px 10px at 413px 14px, #3f77cc 60%, transparent),
    radial-gradient(34px 6px at 455px 14px, #7a90a6, transparent),
    radial-gradient(34px 6px at 520px 14px, #7a90a6, transparent),
    radial-gradient(22px 18px at 600px 14px, #7690b8, transparent),
    radial-gradient(20px 18px at 660px 14px, #8aa0b4, transparent),
    radial-gradient(24px 18px at 728px 14px, #6b88b8, transparent),
    radial-gradient(26px 20px at 800px 12px, #d0dade, transparent),
    radial-gradient(24px 18px at 866px 14px, #6783b4, transparent),
    radial-gradient(24px 18px at 940px 14px, #7d96bc, transparent),
    radial-gradient(24px 18px at 1010px 14px, #7b95bb, transparent),
    radial-gradient(28px 20px at 1075px 14px, #5f7bb0, transparent),
    radial-gradient(22px 18px at 1145px 14px, #6c88b6, transparent),
    linear-gradient(90deg, #93a9b5 0, #b4c6cd 20%, #a9bcc5 45%, #a4b7c4 55%, #b0c1c6 70%, #a6b9c2 85%, #aabfcd);
}
.logo { width: 16px; height: 16px; margin: 0 5px 2px 0; fill: none; }
h1 { flex: 1; margin: 0; font-size: 12px; font-weight: 400; line-height: 20px; }
.wincontrols { display: flex; align-self: flex-start; margin-right: 5px; border: 1px solid #414c5b; border-top: 0; border-radius: 0 0 5px 5px; overflow: hidden; box-shadow: 0 0 2px #fff; }
.wincontrols button { width: 27px; height: 17px; display: flex; align-items: center; justify-content: center; background: linear-gradient(#c3ced9 45%, #8d9eaf 50%, #b6c6d2); border-right: 1px solid #4f5b6b; }
.wincontrols .close { width: 47px; border: 0; background: linear-gradient(#dc9a8a 45%, #bd2d12 50%, #d9684b); }

.menubar {
  height: 20px;
  padding-left: 7px;
  display: flex;
  gap: 14px;
  align-items: center;
  background: linear-gradient(#fff 0, #e8ecf6 35%, #d5dcef 45%, #dfe5f4);
  border-bottom: 1px solid #b4bccb;
  font-size: 12px;
}

.toolbar { display: flex; justify-content: space-between; padding: 6px 6px; }
.tools { display: flex; gap: 3px; }
.group { display: flex; position: relative; box-shadow: inset 0 0 0 1px var(--line); }
.group button { width: 26px; height: 26px; }
.group .active { background: #91d7eb; box-shadow: inset 0 0 0 1px var(--line); }
.vertical { flex-direction: column; }
.ico { width: 26px; height: 26px; fill: none; stroke: #606060; stroke-width: 1; }

.work { flex: 1; display: flex; padding: 0 6px; }
.side { width: 26px; margin-right: 6px; display: flex; flex-direction: column; gap: 3px; }
.apart { margin-top: 17px; }

.stage { flex: 1; min-width: 0; display: flex; flex-direction: column; }
.canvas { flex: 1; position: relative; overflow: hidden; background: #c6c6c6; border: 1px solid var(--line); border-width: 1px 0 0 1px; }
.drawing { position: absolute; left: 0; top: 0; }
.lettering { font-family: "Liberation Serif", serif; font-style: italic; fill: none; stroke: #f88; stroke-width: 1; }
.dims { font-family: var(--wide); font-size: 12px; fill: #777; }
.viewtag { position: absolute; left: 8px; top: 2px; height: 14px; padding: 0 3px; border: 1px solid #6fbdd3; background: #91d7eb; color: #477b8b; font: 9px/12px var(--wide); white-space: nowrap; }
.doctab { position: absolute; left: 0; bottom: 0; width: 162px; height: 25px; display: flex; align-items: center; padding: 2px 14px 0 15px; color: #444; font-size: 12px; justify-content: space-between; }
.tabshape { position: absolute; inset: 0; width: 100%; height: 100%; }
.doctab span, .doctab button { position: relative; white-space: nowrap; }
.doctab button { width: 14px; height: 14px; margin-bottom: 6px; border-radius: 7px; box-shadow: 0 0 1px #999; color: #28a9d0; font-weight: 700; font-size: 11px; line-height: 12px; text-align: center; }

.ctx { position: absolute; left: 467px; top: 325px; width: 245px; padding: 2px; border: 1px solid #979797; background: linear-gradient(90deg, transparent 28px, #e2e3e3 28px, #e2e3e3 29px, #fff 29px, #fff 30px, transparent 30px), #f0f0f0; box-shadow: 3px 3px 3px #777; }
.ctxgroup button { width: 100%; height: 22px; padding-left: 32px; line-height: 22px; font-size: 12px; }
.ctxgroup button:disabled { color: #7c7c7c; }
.ctxgroup + .ctxgroup { margin-top: 3px; padding-top: 5px; background: linear-gradient(#e0e0e0 1px, #fff 1px, #fff 2px, transparent 2px) no-repeat 28px 0; }
.mark { position: absolute; left: 20px; top: 313px; }

.hscroll { height: 17px; display: flex; background: #eee; border: 1px solid var(--cyan); border-width: 1px 0; }
.hscroll button { width: 16px; height: 15px; background: var(--cyan); }
.thumb { background: var(--cyan); flex: 106 0 0; }
.h1 { flex: 277 0 0; }
.h2 { flex: 435 0 0; }
.vcol { width: 17px; margin-bottom: 16px; display: flex; flex-direction: column; gap: 4px; }
.expand { width: 17px; height: 16px; background: var(--cyan); }
.vscroll { flex: 1; display: flex; flex-direction: column; background: #eee; border: 1px solid var(--cyan); border-width: 0 1px; }
.vscroll button { height: 16px; background: var(--cyan); overflow: hidden; }
.v1 { flex: 273 0 0; }
.v2 { flex: 429 0 0; }

.panel { width: 364px; margin-left: 6px; border: 1px solid var(--line); padding: 0 9px 17px; display: flex; flex-direction: column; }
h2 { margin: 0 0 18px; height: 33px; padding: 8px 0 0 1px; border-bottom: 1px solid var(--cyan); font: 400 15px/20px "Liberation Sans", sans-serif; position: relative; }
h2::after { content: ""; position: absolute; left: 0; right: 0; bottom: 3px; border-top: 1px solid #888; }
.props { flex: 1; width: 312px; margin-left: 8px; border: 1px solid var(--line); }
h3 { margin: 0; height: 16px; padding-left: 7px; background: #dedede; color: #858585; font-size: 10px; font-weight: 400; line-height: 16px; }
h3:first-child { height: 15px; line-height: 15px; }
h3 label { display: block; }
.block { padding: 6px 5px; }
.field { border: 1px solid var(--line); background: #fff; padding: 3px 2px 1px; outline: 0; height: 23px; }
.fontname { width: 100%; display: block; margin-bottom: 5px; }
.row { display: flex; gap: 6px; }
.fontrow { height: 150px; }
.fontlist { width: 180px; border: 1px solid var(--line); display: flex; }
.names { flex: 1; min-width: 0; overflow: hidden; color: #5e7d8b; }
.names button { width: 100%; height: 30px; padding-left: 6px; line-height: 30px; }
.names .active { background: #91d7eb; color: #4796b2; height: 29px; border-bottom: 1px solid var(--line); }
.f-arial { font-family: "Liberation Sans", sans-serif; font-size: 15px; }
.f-courier { font-family: "Liberation Mono", monospace; font-size: 15px; }
.f-times { font-family: "Liberation Serif", serif; font-size: 15px; }
.f-type { font-family: "Liberation Mono", monospace; font-size: 14px; }
.f-academy { font-family: "Liberation Serif", serif; font-size: 14px; }
.small { flex: none; width: 16px; border-width: 0 0 0 1px; }
.small .tall { height: 23px; }
.fill { flex: 1; }
.styles { flex: 1; min-width: 0; border: 1px solid var(--line); padding-right: 15px; }
.styles button { width: 100%; height: 30px; display: flex; align-items: center; color: #5e7987; font: 700 11px/16px var(--wide); overflow: hidden; }
.styles button:disabled { color: #b9c5cb; }
.glyph { width: 27px; flex: none; text-align: center; font: 22px/22px "Liberation Serif", serif; color: #444; text-decoration-thickness: 1px; }
b.glyph { font-weight: 700; }
i.glyph { font-style: italic; }
button:disabled .glyph { color: #b8b8b8; }
.aligns { height: 72px; border: 1px solid var(--line); display: grid; grid-template-columns: 1fr 1fr; margin-bottom: 6px; }
.aligns button, .pair button { display: flex; align-items: center; gap: 6px; padding-left: 7px; color: #5e7987; font: 700 11px/16px var(--wide); }
.pair { display: flex; height: 36px; border: 1px solid var(--cyan); }
.pair button { flex: 1; gap: 4px; }
.pair svg { font-weight: 400; }
.pair .active { background: #91d7eb; color: #4796b2; }
.pair button + button { border-left: 1px solid var(--cyan); }
.kern button { gap: 2px; padding-left: 4px; }
.kern svg { font-family: "Liberation Serif", serif; font-size: 21px; overflow: visible; }
.sizes { display: flex; align-items: flex-end; gap: 1px; }
.combo { width: 90px; height: 32px; border: 1px solid var(--cyan); padding: 0 4px; display: flex; align-items: center; }
.combo .field { width: 52px; }
.combo button { flex: 1; height: 25px; margin-left: 2px; border-left: 3px double #bbb; display: flex; align-items: center; justify-content: center; }
.unit { width: 36px; height: 24px; border: 1px solid var(--cyan); color: #5e7987; font: 700 11px/16px var(--wide); text-align: center; }
.spacing { height: 39px; display: flex; align-items: center; padding: 4px 5px; }
.spacing label { width: 92px; height: 28px; display: flex; align-items: center; overflow: hidden; line-height: 14px; font-size: 12px; }
.spacing label span { width: 72px; flex: none; }
.slider { width: 104px; height: 23px; margin-right: 7px; border: 1px solid var(--cyan); background: #fff; appearance: none; -webkit-appearance: none; }
.slider::-webkit-slider-thumb { -webkit-appearance: none; width: 11px; height: 21px; background: linear-gradient(#f00 12px, var(--cyan) 12px); clip-path: polygon(5px 0, 6px 0, 6px 12px, 11px 21px, 0 21px, 5px 12px); }
.spacing .field { width: 58px; }
.spin { width: 10px; height: 23px; margin: 0 5px 0 1px; background: #00aedd; }
.spin button { width: 10px; height: 11px; display: flex; align-items: center; justify-content: center; }

.foot { padding: 6px 0 6px 6px; }
.prefs { display: flex; margin-right: 6px; }
.prefs button { width: 24px; }
.prefs .ico { width: 24px; height: 24px; }

.taskbar {
  height: 30px;
  display: flex;
  align-items: center;
  color: #fff;
  border-top: 1px solid #10273c;
  box-shadow: inset 0 1px 0 #78a9c8;
  background:
    linear-gradient(60deg, transparent 79.500%, #6a93c388 80.200%, #6a93c388 80.800%, transparent 81.500%),
    linear-gradient(90deg, #27729b 0, #2b7aa6 20%, #1d6698 45%, #1f6da5 60%, #184c83 72%, #123b70);
}
.start { width: 38px; height: 34px; margin: -4px 0 0 8px; position: relative; }
.grip { width: 9px; height: 20px; margin-left: 11px; background: radial-gradient(circle at 1px 1px, #0b2c4c 1px, transparent 1px) 0 0 / 3px 4px; }
.pin { width: 18px; height: 18px; margin-left: 28px; }
.p1 { margin-left: 22px; }
.p2 { margin-left: 15px; }
.task { width: 159px; height: 28px; margin-left: 16px; padding-left: 9px; display: flex; align-items: center; gap: 4px; border: 1px solid #134264; border-radius: 3px; box-shadow: inset 0 0 0 1px #93bed4; background: linear-gradient(100deg, #6aa3be, #427fa5 60%, #3a7ba4); font-size: 12px; }
.on { margin-left: 15px; background: linear-gradient(100deg, #bcd5e1, #86b1ca 55%, #6a9cbb); border-color: #dce9ef; }
.paint { margin-left: 16px; background: linear-gradient(100deg, #4a84ae, #2a659b 60%, #225e93); box-shadow: inset 0 0 0 1px #6c9dc1; }
.tray { margin-left: auto; display: flex; align-items: center; height: 29px; gap: 9px; }
.lang { font-size: 12px; margin-bottom: 4px; margin-right: 8px; }
time { margin: 0 16px 0 20px; font-size: 12px; }
.desktop { width: 14px; height: 29px; background: linear-gradient(120deg, #5480ac, #1c4676 50%, #0c2a51); border-left: 1px solid #0a203a; }
</style>
